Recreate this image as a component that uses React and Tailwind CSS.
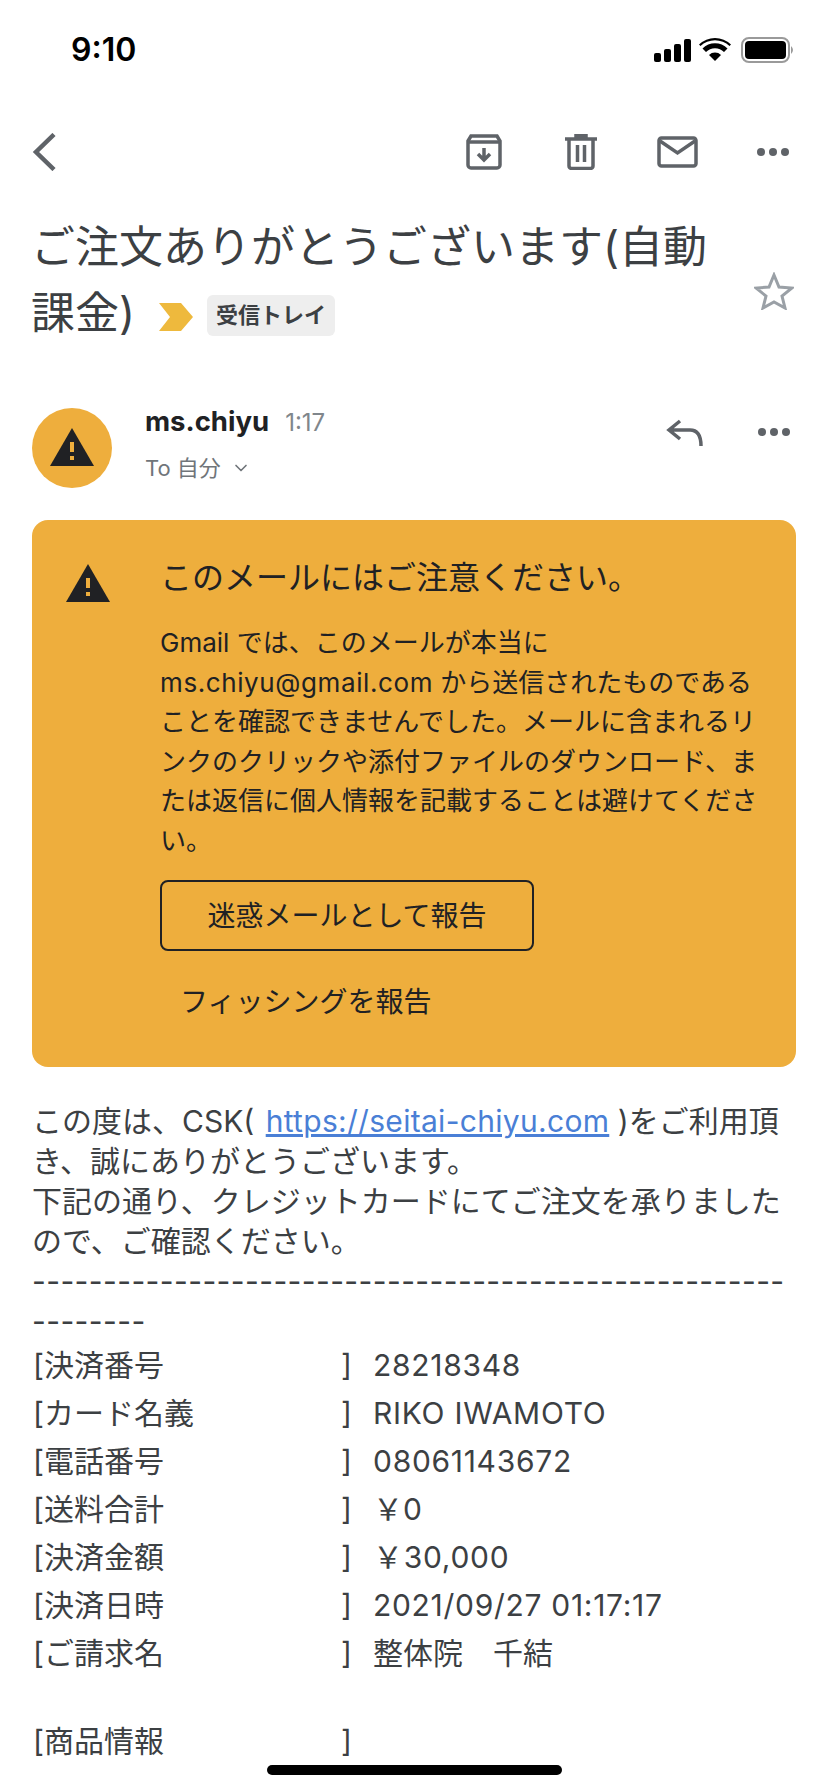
import React from "react";
import { ChevronDown } from "lucide-react";

const rows = [
  ["[決済番号", "28218348", true],
  ["[カード名義", "RIKO IWAMOTO", true],
  ["[電話番号", "08061143672", true],
  ["[送料合計", "￥0", false],
  ["[決済金額", "￥30,000", true],
  ["[決済日時", "2021/09/27 01:17:17", true],
  ["[ご請求名", "整体院　千結", false],
];

const Warning = ({ className }) => (
  <svg viewBox="0 0 44 38" className={className}>
    <path d="M22 0 L44 38 H0 Z" fill="#202124" />
    <rect x="20" y="14" width="4" height="10" fill="#eeae3d" />
    <rect x="20" y="28" width="4" height="4" fill="#eeae3d" />
  </svg>
);

const Dots = () => (
  <svg viewBox="0 0 32 8" className="w-8 h-2" fill="#5f6368">
    <circle cx="4" cy="4" r="4" />
    <circle cx="16" cy="4" r="4" />
    <circle cx="28" cy="4" r="4" />
  </svg>
);

const Row = ({ label, value, wide }) => (
  <div className="flex h-12 items-center text-[30px] text-[#3c4043]">
    <span className="w-[308px]">{label}</span>
    <span className="w-[32px]">]</span>
    <span className={wide ? "tracking-[0.7px]" : ""}>{value}</span>
  </div>
);

export default function App() {
  return (
    <div className="font-['Inter','Noto_Sans_CJK_JP',sans-serif] w-[828px] h-[1792px] overflow-hidden bg-white relative">
      <div className="h-[100px] flex items-center justify-between pl-[71px] pr-[33px]">
        <span className="text-[32px] font-semibold text-black">9:10</span>
        <div className="flex items-center">
          <svg viewBox="0 0 37 23" className="w-[37px] h-[23px]" fill="#000">
            <rect x="0" y="14" width="7" height="9" rx="2" />
            <rect x="10" y="10" width="7" height="13" rx="2" />
            <rect x="20" y="5" width="7" height="18" rx="2" />
            <rect x="30" y="0" width="7" height="23" rx="2" />
          </svg>
          <svg viewBox="0 0 32 24" className="w-8 h-6 ml-2" fill="#000">
            <path d="M16 23 L10 17 A8.5 8.5 0 0 1 22 17 Z" />
            <path d="M7 14 L3.5 10.5 A17.5 17.5 0 0 1 28.5 10.5 L25 14 A12.5 12.5 0 0 0 7 14 Z" />
            <path d="M1.5 8 L0 6.5 A23 23 0 0 1 32 6.5 L30.5 8 A21 21 0 0 0 1.5 8 Z" />
          </svg>
          <svg viewBox="0 0 54 26" className="w-[54px] h-[26px] ml-[10px]">
            <rect x="1" y="1" width="47" height="24" rx="7" fill="none" stroke="#9a9a9a" strokeWidth="2" />
            <rect x="4" y="4" width="41" height="18" rx="4" fill="#000" />
            <path d="M50 9 Q54 13 50 17 Z" fill="#9a9a9a" />
          </svg>
        </div>
      </div>

      <div className="h-[38px] mt-[33px] flex items-center pl-[32px]">
        <svg viewBox="0 0 24 38" className="w-6 h-[38px]" fill="none" stroke="#5f6368" strokeWidth="4.5">
          <path d="M22 1.5 L4 19 L22 36.5" />
        </svg>
        <svg viewBox="0 0 36 36" className="w-9 h-9 ml-[410px]" fill="none" stroke="#5f6368" strokeWidth="3.5">
          <path d="M2 7 L5 2 H31 L34 7 V31 a3 3 0 0 1 -3 3 H5 a3 3 0 0 1 -3 -3 Z" />
          <path d="M2 8 H34" />
          <path d="M18 14 V26 M12 20 L18 26 L24 20" />
        </svg>
        <svg viewBox="0 0 32 36" className="w-8 h-9 ml-[63px]" fill="none" stroke="#5f6368" strokeWidth="3.5">
          <path d="M0 5 H32 M11 5 V1.5 H21 V5" />
          <path d="M4 5 V32 a2.5 2.5 0 0 0 2.5 2.5 H25.5 a2.5 2.5 0 0 0 2.5 -2.5 V5" />
          <path d="M12.5 11 V28 M19.5 11 V28" />
        </svg>
        <svg viewBox="0 0 41 32" className="w-[41px] h-8 ml-[60px]" fill="none" stroke="#5f6368" strokeWidth="3.5">
          <rect x="2" y="2" width="37" height="28" rx="2.5" />
          <path d="M3 5 L20.5 17 L38 5" />
        </svg>
        <div className="ml-[59px] flex"><Dots /></div>
      </div>

      <div className="flex pl-[31px] mt-[43px]">
        <h1 className="w-[703px] text-[44px] leading-[66px] font-normal text-[#3c4043]">
          ご注文ありがとうございます(自動課金)
          <svg viewBox="0 0 34 28" className="inline w-[34px] h-7 ml-[24px] align-[-2px]" fill="#eeb93d">
            <path d="M0 0 H22 L34 14 L22 28 H0 L11 14 Z" />
          </svg>
          <span className="inline-flex items-center ml-[14px] h-[41px] px-[9px] rounded-md bg-[#eeeeee] text-[22px] font-bold text-[#3c4043] align-[6px]">
            受信トレイ
          </span>
        </h1>
        <svg viewBox="0 0 40 38" className="w-10 h-[38px] ml-5 mt-[58px]" fill="none" stroke="#9aa0a6" strokeWidth="3">
          <path d="M20 3 L25 15 L38 16 L28 24 L31 36 L20 30 L9 36 L12 24 L2 16 L15 15 Z" />
        </svg>
      </div>

      <div className="flex pl-8 mt-[62px] h-20">
        <div className="w-20 h-20 rounded-full bg-[#eeae3d] flex items-center justify-center">
          <Warning className="w-11 h-[38px] mb-[2px]" />
        </div>
        <div className="ml-[33px] w-[521px]">
          <div className="flex items-baseline gap-[16px] leading-[30px] mt-[-2px]">
            <span className="text-[27.5px] font-bold text-[#202124]">ms.chiyu</span>
            <span className="text-[24px] text-[#80868b]">1:17</span>
          </div>
          <div className="flex items-center mt-4 text-[22px] leading-[28px] text-[#70757a]">
            <span>To 自分</span>
            <ChevronDown size={20} className="ml-[10px]" />
          </div>
        </div>
        <svg viewBox="0 0 37 27" className="w-[37px] h-[27px] mt-[11px]" fill="none" stroke="#5f6368" strokeWidth="3.5">
          <path d="M14 2 L3 11 L14 20 M3 11 H24 C31 11 35 16 35 27" />
        </svg>
        <div className="mt-5 ml-[55px]"><Dots /></div>
      </div>

      <div className="mx-8 mt-8 h-[547px] rounded-2xl bg-[#eeae3d] flex pt-[44px] pl-[34px] pr-[32px] text-[#202124]">
        <Warning className="w-11 h-[38px] shrink-0" />
        <div className="ml-[50px] w-[600px]">
          <div className="text-[32px] leading-[48px] -mt-[10px]">このメールにはご注意ください。</div>
          <p className="mt-[21px] text-[26px] leading-[39.5px]">
            Gmail では、このメールが本当に <span className="tracking-[0.6px]">ms.chiyu@gmail.com</span> から送信されたものであることを確認できませんでした。メールに含まれるリンクのクリックや添付ファイルのダウンロード、または返信に個人情報を記載することは避けてください。
          </p>
          <div className="mt-5 w-[374px] h-[71px] rounded-lg border-2 border-[#202124] flex items-center justify-center text-[28px]">
            迷惑メールとして報告
          </div>
          <div className="mt-[15px] ml-5 h-[72px] flex items-center text-[28px]">フィッシングを報告</div>
        </div>
      </div>

      <div className="pl-8 pr-[32px] mt-[34px] text-[30px] leading-[40px] text-[#3c4043]">
        <p>
          この度は、CSK( <a className="ml-[3px] text-[#4a7fd6] underline tracking-[0.3px]">https://seitai-chiyu.com</a> )をご利用頂き、誠にありがとうございます。
        </p>
        <p>下記の通り、クレジットカードにてご注文を承りましたので、ご確認ください。</p>
        <p className="break-all tracking-[0.4px]">-------------------------------------------------------------</p>
      </div>
      <div className="pl-[33px] pr-[32px]">
        {rows.map(([label, value, wide]) => (
          <Row key={label} label={label} value={value} wide={wide} />
        ))}
        <div className="h-10" />
        <Row label="[商品情報" value="" />
      </div>

      <div className="absolute left-[267px] bottom-[17px] w-[295px] h-[10px] rounded-full bg-black" />
    </div>
  );
}
